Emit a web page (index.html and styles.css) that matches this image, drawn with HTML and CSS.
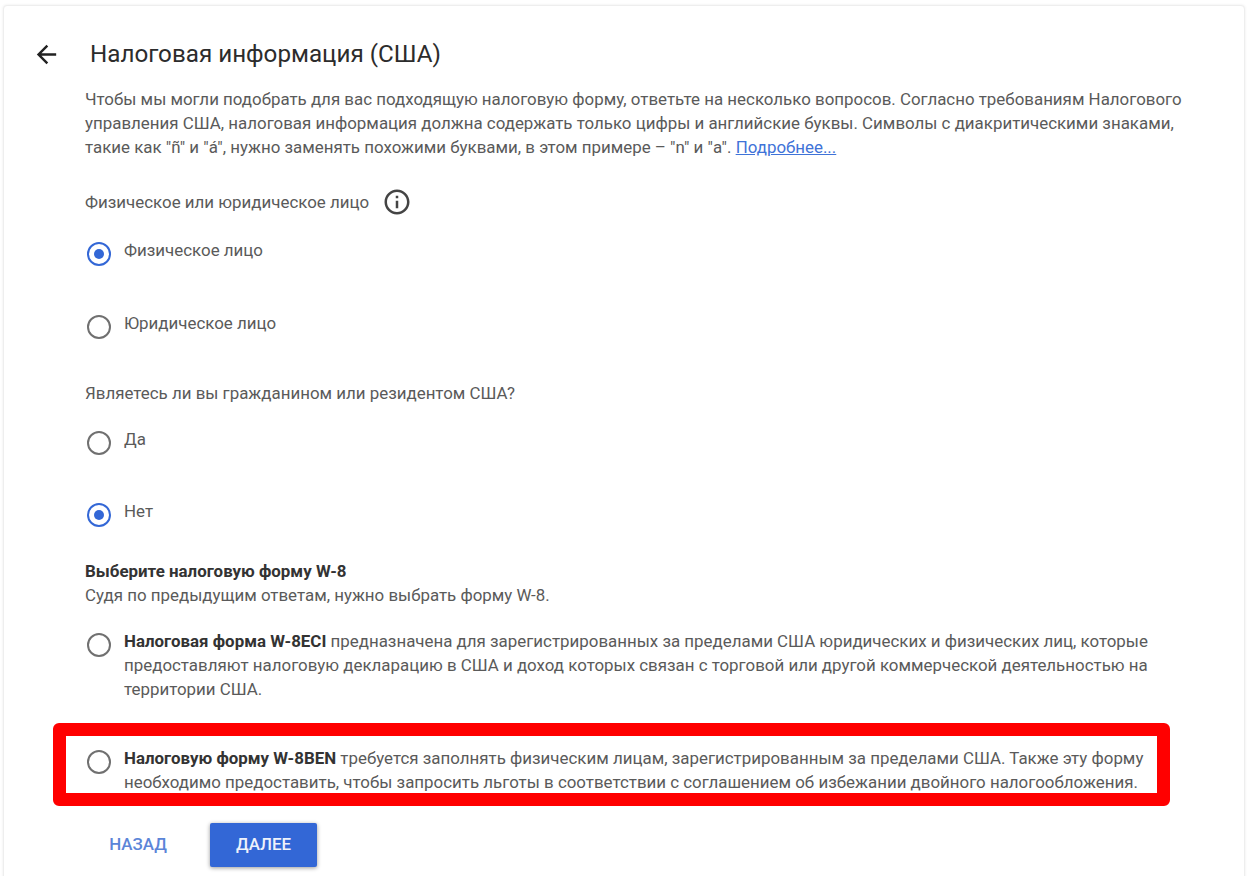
FILE: index.html
```html
<!DOCTYPE html>
<html lang="en">
<head>
  <meta charset="UTF-8" />
  <meta name="viewport" content="width=device-width, initial-scale=1.0"/>
  <title>Налоговая информация (США)</title>
  <link rel="stylesheet" href="styles.css">
</head>
<body>
  <div class="card">
    <div class="header">
      <svg class="back-icon" viewBox="0 0 24 24" width="29" height="29"><path d="M20 11H7.83l5.59-5.59L12 4l-8 8 8 8 1.41-1.41L7.83 13H20v-2z"/></svg>
      <h1>Налоговая информация (США)</h1>
    </div>
    <p class="intro">Чтобы мы могли подобрать для вас подходящую налоговую форму, ответьте на несколько вопросов. Согласно требованиям Налогового управления США, налоговая информация должна содержать только цифры и английские буквы. Символы с диакритическими знаками, такие как "ñ" и "á", нужно заменять похожими буквами, в этом примере – "n" и "a". <a href="#">Подробнее...</a></p>

    <div class="question question-info">
      <span>Физическое или юридическое лицо</span>
      <svg class="info-icon" viewBox="0 0 24 24" width="30" height="30"><path d="M11 7h2v2h-2zm0 4h2v6h-2zm1-9C6.48 2 2 6.48 2 12s4.48 10 10 10 10-4.48 10-10S17.52 2 12 2zm0 18c-4.41 0-8-3.59-8-8s3.59-8 8-8 8 3.59 8 8-3.59 8-8 8z"/></svg>
    </div>
    <div class="option first checked"><span class="radio"></span><span class="label">Физическое лицо</span></div>
    <div class="option"><span class="radio"></span><span class="label">Юридическое лицо</span></div>

    <div class="question question-citizen">Являетесь ли вы гражданином или резидентом США?</div>
    <div class="option citizen-yes"><span class="radio"></span><span class="label">Да</span></div>
    <div class="option checked"><span class="radio"></span><span class="label">Нет</span></div>

    <div class="form-head">
      <strong>Выберите налоговую форму W-8</strong>
      <div>Судя по предыдущим ответам, нужно выбрать форму W-8.</div>
    </div>

    <div class="form-option eci">
      <span class="radio"></span>
      <p><strong>Налоговая форма W-8ECI</strong> предназначена для зарегистрированных за пределами США юридических и физических лиц, которые предоставляют налоговую декларацию в США и доход которых связан с торговой или другой коммерческой деятельностью на территории США.</p>
    </div>
    <div class="form-option ben">
      <span class="radio"></span>
      <p><strong>Налоговую форму W-8BEN</strong> требуется заполнять физическим лицам, зарегистрированным за пределами США. Также эту форму необходимо предоставить, чтобы запросить льготы в соответствии с соглашением об избежании двойного налогообложения.</p>
      <div class="highlight"></div>
    </div>

    <div class="actions">
      <button class="btn-back">НАЗАД</button>
      <button class="btn-next">ДАЛЕЕ</button>
    </div>
  </div>
</body>
</html>
```

FILE: styles.css
```css
html, body {
  height: 100%;
}
body {
  margin: 0;
  overflow: hidden;
  background-color: #fff;
  font-family: Roboto, "Liberation Sans", sans-serif;
  font-size: 16.9px;
  line-height: 24px;
  color: #5a5a5a;
}
.card {
  box-sizing: border-box;
  height: 900px;
  margin: 5px 3px 0;
  padding: 28px 54px 0 81px;
  background: white;
  border: 1px solid #eee;
  border-radius: 4px;
  box-shadow: 0 0 3px rgba(0,0,0,0.08);
}
.header {
  display: flex;
  align-items: center;
  height: 40px;
  margin-left: -53px;
}
.back-icon {
  fill: #222;
  margin-right: 29px;
}
h1 {
  margin: 0;
  font-size: 24.2px;
  font-weight: 400;
  color: #2c2c2c;
}
.intro {
  margin: 13px 0 0;
}
.intro a {
  color: #3f73d8;
}
.question {
  color: #5a5a5a;
}
.question-info {
  display: flex;
  align-items: center;
  gap: 13px;
  margin-top: 28px;
}
.info-icon {
  fill: #444;
}
.option {
  display: flex;
  gap: 13px;
  height: 73px;
}
.option.first {
  margin-top: 23px;
}
.option .label {
  margin-top: -2px;
}
.radio {
  flex: none;
  box-sizing: border-box;
  position: relative;
  width: 24px;
  height: 24px;
  margin-top: 2px;
  margin-left: 2px;
  border: 2px solid #707070;
  border-radius: 50%;
}
.checked .radio {
  border-color: #3367d6;
}
.checked .radio::after {
  content: "";
  position: absolute;
  inset: 5px;
  border-radius: 50%;
  background: #3367d6;
}
.question-citizen {
  margin-top: -5px;
}
.citizen-yes {
  height: 72px;
  margin-top: 24px;
}
.form-head {
  margin-top: -15px;
}
.form-head strong,
.form-option strong {
  font-weight: 700;
  color: #333;
}
.form-option {
  display: flex;
  gap: 13px;
}
.form-option p {
  margin: -2px 0 0;
}
.eci {
  margin-top: 24px;
}
.ben {
  position: relative;
  margin-top: 47px;
}
.highlight {
  position: absolute;
  left: -32px;
  top: -25px;
  width: 1117px;
  height: 83px;
  box-sizing: border-box;
  border: 13px solid #ff0000;
  border-radius: 6px;
}
.actions {
  display: flex;
  align-items: center;
  gap: 19px;
  margin-top: 29px;
}
button {
  font-family: Roboto, "Liberation Sans", sans-serif;
  font-size: 16.9px;
  font-weight: 500;
  padding: 0 0 2px;
  border: none;
  border-radius: 2px;
}
.btn-back {
  width: 106px;
  height: 44px;
  background: none;
  color: #5b85d8;
}
.btn-next {
  width: 107px;
  height: 44px;
  background: #3367d6;
  color: #eef2fb;
  box-shadow: 0 1px 4px rgba(0,0,0,0.4);
}
```
